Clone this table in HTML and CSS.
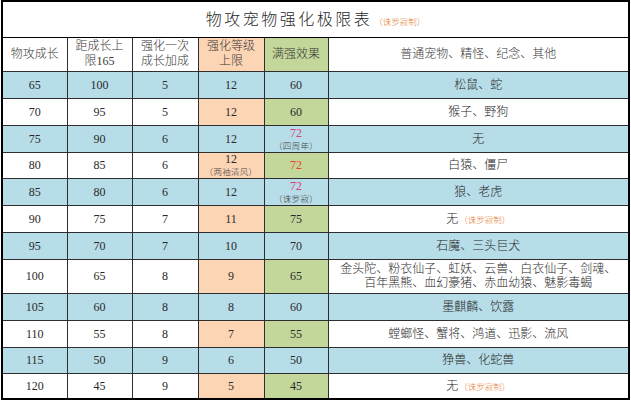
FILE: index.html
```html
<!DOCTYPE html>
<html lang="zh-CN">
<head>
<meta charset="utf-8">
<title>物攻宠物强化极限表</title>
<link rel="stylesheet" href="styles.css">
</head>
<body>
<div class="sheet">
<table class="limits">
  <colgroup>
    <col class="c1"><col class="c2"><col class="c3"><col class="c4"><col class="c5"><col class="c6">
  </colgroup>
  <tr class="title-row">
    <td colspan="6"><span class="title">物攻宠物强化极限表</span><span class="note">（诛罗寂制）</span></td>
  </tr>
  <tr class="head">
    <td>物攻成长</td>
    <td>距成长上<br>限165</td>
    <td>强化一次<br>成长加成</td>
    <td class="lv">强化等级<br>上限</td>
    <td class="full">满强效果</td>
    <td>普通宠物、精怪、纪念、其他</td>
  </tr>
  <tr class="blue r27">
    <td>65</td><td>100</td><td>5</td><td class="lv">12</td><td class="full">60</td><td>松鼠、蛇</td>
  </tr>
  <tr class="plain r27">
    <td>70</td><td>95</td><td>5</td><td class="lv">12</td><td class="full">60</td><td>猴子、野狗</td>
  </tr>
  <tr class="blue r27">
    <td>75</td><td>90</td><td>6</td><td class="lv">12</td>
    <td class="full"><div class="num pink">72</div><div class="sub">（四周年）</div></td>
    <td>无</td>
  </tr>
  <tr class="plain r26">
    <td>80</td><td>85</td><td>6</td>
    <td class="lv"><div class="num">12</div><div class="sub">（两袖清风）</div></td>
    <td class="full"><span class="red">72</span></td>
    <td>白猿、僵尸</td>
  </tr>
  <tr class="blue r27">
    <td>85</td><td>80</td><td>6</td><td class="lv">12</td>
    <td class="full"><div class="num pink">72</div><div class="sub">（诛罗寂）</div></td>
    <td>狼、老虎</td>
  </tr>
  <tr class="plain r27">
    <td>90</td><td>75</td><td>7</td><td class="lv">11</td><td class="full">75</td>
    <td>无<span class="note small">（诛罗寂制）</span></td>
  </tr>
  <tr class="blue r27">
    <td>95</td><td>70</td><td>7</td><td class="lv">10</td><td class="full">70</td><td>石魔、三头巨犬</td>
  </tr>
  <tr class="plain r34">
    <td>100</td><td>65</td><td>8</td><td class="lv">9</td><td class="full">65</td>
    <td class="multi">金头陀、粉衣仙子、虹妖、云兽、白衣仙子、剑魂、<br>百年黑熊、血幻豪猪、赤血幼猿、魅影毒蝎</td>
  </tr>
  <tr class="blue r27">
    <td>105</td><td>60</td><td>8</td><td class="lv">8</td><td class="full">60</td><td>墨麒麟、饮露</td>
  </tr>
  <tr class="plain r27">
    <td>110</td><td>55</td><td>8</td><td class="lv">7</td><td class="full">55</td><td>螳螂怪、蟹将、鸿道、迅影、流风</td>
  </tr>
  <tr class="blue r26">
    <td>115</td><td>50</td><td>9</td><td class="lv">6</td><td class="full">50</td><td>狰兽、化蛇兽</td>
  </tr>
  <tr class="plain r26">
    <td>120</td><td>45</td><td>9</td><td class="lv">5</td><td class="full">45</td>
    <td>无<span class="note small">（诛罗寂制）</span></td>
  </tr>
</table>
</div>
</body>
</html>
```
FILE: styles.css
```css
* { box-sizing: border-box; }

html, body {
  margin: 0;
  padding: 0;
  background: #ffffff;
}

body {
  font-family: "Liberation Serif", "Noto Sans CJK SC", serif;
  color: #2a2a2a;
}

.sheet {
  padding-left: 1px;
  width: 631px;
  height: 400px;
  overflow: hidden;
}

.limits {
  border-collapse: collapse;
  table-layout: fixed;
  width: 627px;
  border: 2px solid #000;
}

.c1 { width: 65px; }
.c2 { width: 65px; }
.c3 { width: 66px; }
.c4 { width: 66px; }
.c5 { width: 64px; }
.c6 { width: 301px; }

.limits td {
  border: 1px solid #2e2e2e;
  padding: 0;
  text-align: center;
  vertical-align: middle;
  font-size: 12px;
  line-height: 14px;
  font-weight: 300;
}

.title-row td {
  height: 36px;
  background: #fff;
  border-bottom: 1px solid #000;
}

.title {
  font-family: "Noto Sans CJK SC", sans-serif;
  font-size: 16px;
  letter-spacing: 2.5px;
  color: #2a2a2a;
  font-weight: 300;
}

.note {
  font-family: "Noto Sans CJK SC", sans-serif;
  font-size: 8.5px;
  color: #e8843c;
  margin-left: 2px;
}

.note.small {
  font-size: 8.5px;
  margin-left: 1px;
}

.head td {
  height: 34px;
  background: #fff;
  color: #383838;
  line-height: 15px;
}

.r27 td { height: 27px; }
.r26 td { height: 26px; }
.r34 td { height: 34px; }

.blue td { background: #b7dde8; }
.plain td { background: #ffffff; }

.head .lv,
.plain .lv { background: #fcd5b4; }

.head .full,
.plain .full { background: #c4d79b; }

.num {
  line-height: 12px;
  height: 12px;
}

.sub {
  font-family: "Noto Sans CJK SC", sans-serif;
  font-size: 8.5px;
  line-height: 12px;
  height: 12px;
  color: #444;
  letter-spacing: 0.3px;
  overflow: hidden;
}

.pink { color: #dc3c78; }
.red { color: #e4432c; }

.multi {
  line-height: 14px;
}
```
